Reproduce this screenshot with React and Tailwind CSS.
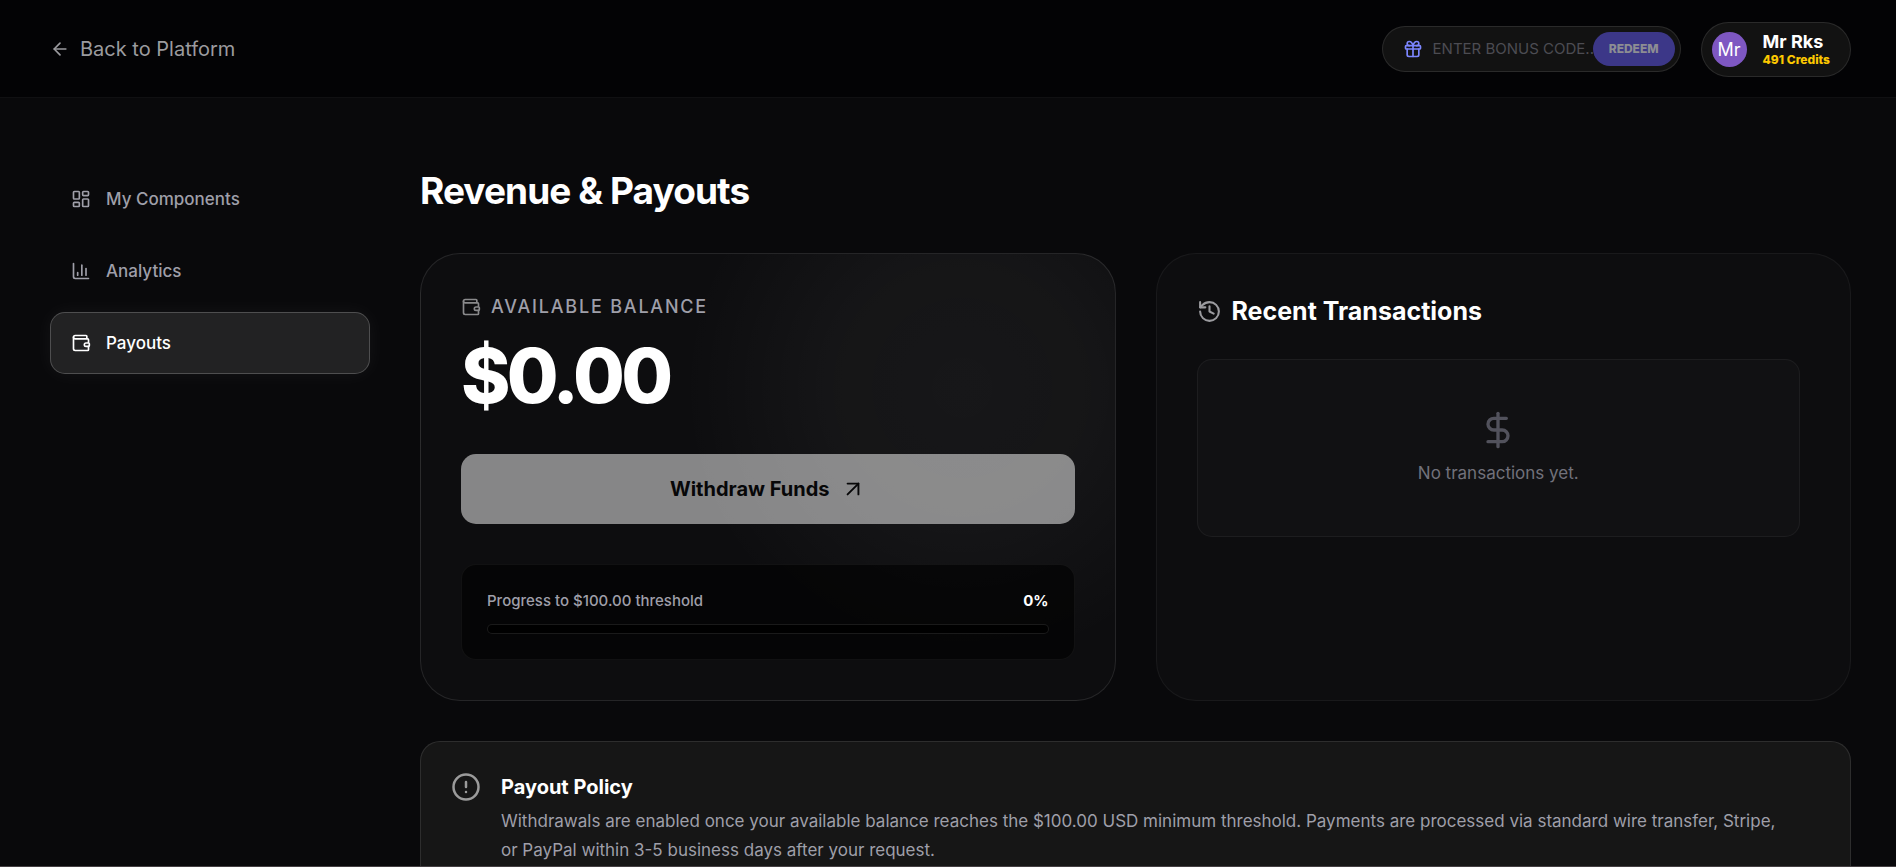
import { useState } from "react";
import {
  ArrowLeft,
  ArrowUpRight,
  ChartColumn,
  CircleAlert,
  DollarSign,
  Gift,
  History,
  LayoutDashboard,
} from "lucide-react";

const THRESHOLD = 100;

function WalletIcon({ size = 24, className }) {
  return (
    <svg
      width={size}
      height={size}
      viewBox="0 0 24 24"
      fill="none"
      stroke="currentColor"
      strokeWidth="2"
      strokeLinecap="round"
      strokeLinejoin="round"
      className={className}
      aria-hidden="true"
    >
      <path d="M19 7V4a1 1 0 0 0-1-1H5a2 2 0 0 0 0 4h15a1 1 0 0 1 1 1v4h-3a2 2 0 0 0 0 4h3a1 1 0 0 0 1-1v-2a1 1 0 0 0-1-1" />
      <path d="M3 5v14a2 2 0 0 0 2 2h15a1 1 0 0 0 1-1v-4" />
    </svg>
  );
}

const NAV_ITEMS = [
  { label: "My Components", icon: LayoutDashboard },
  { label: "Analytics", icon: ChartColumn },
  { label: "Payouts", icon: WalletIcon },
];

function Header() {
  const [code, setCode] = useState("");

  return (
    <header className="flex h-[98px] items-center justify-between border-b border-white/5 bg-[#030305] pt-px pr-[45px] pl-[50px]">
      <a href="#platform" className="flex items-center gap-[10px] text-[20px] text-[#9b9b9f]">
        <ArrowLeft size={20} />
        Back to Platform
      </a>

      <div className="flex items-center gap-5">
        <form
          onSubmit={(event) => event.preventDefault()}
          className="flex h-[46px] w-[299px] items-center rounded-full border border-white/10 bg-[#121212] pr-[5px] pl-5"
        >
          <Gift size={20} className="shrink-0 text-[#7c86ff]" />
          <input
            aria-label="Bonus code"
            value={code}
            onChange={(event) => setCode(event.target.value)}
            placeholder="ENTER BONUS CODE..."
            className="ml-[10px] min-w-0 flex-1 bg-transparent text-[15px] text-white outline-none placeholder:text-[#4c4c52]"
          />
          <button
            type="submit"
            className="h-[34px] shrink-0 rounded-full bg-[#3c3788] px-4 text-[12px] font-extrabold text-[#8d8d93]"
          >
            REDEEM
          </button>
        </form>

        <button
          type="button"
          className="flex h-[55px] items-center gap-4 rounded-full border border-white/10 bg-[#121212] pr-5 pl-[10px] text-left"
        >
          <span className="flex size-[35px] items-center justify-center rounded-full bg-[#7e57c2] text-[18px] text-white">
            Mr
          </span>
          <span className="flex flex-col">
            <span className="text-[18px] leading-[20px] font-bold text-white">Mr Rks</span>
            <span className="text-[12px] leading-[15px] font-extrabold text-[#fcc800]">
              491 Credits
            </span>
          </span>
        </button>
      </div>
    </header>
  );
}

function Sidebar() {
  return (
    <nav className="flex w-80 shrink-0 flex-col gap-[10px]">
      {NAV_ITEMS.map(({ label, icon: Icon }) => {
        const active = label === "Payouts";
        return (
          <a
            key={label}
            href="#"
            aria-current={active ? "page" : undefined}
            className={
              active
                ? "flex h-[62px] items-center gap-[15px] rounded-[15px] border border-white/20 bg-[#222223] px-5 text-[17px] leading-[25px] font-medium text-white shadow-[0_0_20px_rgba(255,255,255,0.05)]"
                : "flex h-[62px] items-center gap-[15px] rounded-[15px] border border-transparent px-5 text-[17px] leading-[25px] font-medium text-[#9f9fa9]"
            }
          >
            <Icon size={20} />
            {label}
          </a>
        );
      })}
    </nav>
  );
}

function BalanceCard({ balance }) {
  const progress = Math.min(100, Math.round((balance / THRESHOLD) * 100));

  return (
    <section className="rounded-[40px] border border-white/10 bg-[#0d0d0f] bg-[radial-gradient(circle_at_78%_30%,rgba(255,255,255,0.045),rgba(255,255,255,0.035)_120px,transparent_280px)] p-10">
      <h2 className="flex items-center gap-[10px] text-[18px] leading-[25px] font-medium tracking-widest text-[#9f9fa9] uppercase">
        <WalletIcon size={20} className="text-[#8a8a8c]" />
        Available Balance
      </h2>
      <p className="mt-3 text-[75px] leading-[90px] font-extrabold tracking-tighter text-white">
        ${balance.toFixed(2)}
      </p>
      <button
        type="button"
        className="mt-[33px] flex h-[70px] w-full items-center justify-center gap-[10px] rounded-[15px] bg-white/50 text-[20px] font-bold text-[#070708]"
      >
        Withdraw Funds
        <ArrowUpRight size={26} strokeWidth={1.75} />
      </button>
      <div className="mt-10 rounded-[15px] border border-white/5 bg-black/60 p-[25px]">
        <div className="flex items-center justify-between text-[15px] leading-[22px]">
          <span className="font-medium text-[#9f9fa9]">
            Progress to ${THRESHOLD.toFixed(2)} threshold
          </span>
          <span className="font-bold text-white">{progress}%</span>
        </div>
        <div className="mt-3 h-[10px] overflow-hidden rounded-full border border-white/10 bg-black">
          <div className="h-full bg-white" style={{ width: `${progress}%` }} />
        </div>
      </div>
    </section>
  );
}

function TransactionsCard() {
  return (
    <section className="rounded-[40px] border border-white/5 bg-[#0d0d0f] p-10">
      <h2 className="flex items-center gap-[10px] text-[25px] leading-[35px] font-bold text-white">
        <History size={25} className="text-[#9b9b9f]" />
        Recent Transactions
      </h2>
      <div className="mt-[30px] mr-[10px] flex flex-col items-center rounded-[15px] border border-white/5 bg-[#111113] py-[50px]">
        <DollarSign size={40} className="text-[#52525c]" />
        <p className="mt-[10px] text-[17px] leading-[26px] text-[#71717b]">No transactions yet.</p>
      </div>
    </section>
  );
}

function PolicyNotice() {
  return (
    <section className="mt-10 flex items-start gap-5 rounded-[20px] border border-white/10 bg-[#161616] p-[30px]">
      <CircleAlert size={30} className="shrink-0 text-[#9b9b9b]" />
      <div>
        <h3 className="text-[20px] leading-[30px] font-bold text-white">Payout Policy</h3>
        <p className="mt-[5px] pr-8 text-[17px] leading-[29px] text-[#9f9fa9]">
          Withdrawals are enabled once your available balance reaches the $100.00 USD minimum
          threshold. Payments are processed via standard wire transfer, Stripe, or PayPal within
          3-5 business days after your request.
        </p>
      </div>
    </section>
  );
}

export default function App() {
  return (
    <div className="h-screen overflow-hidden border-b border-[#454043] bg-[#09090b] font-['Inter',sans-serif]">
      <Header />
      <div className="flex gap-[50px] pt-[70px] pr-[45px] pl-[50px]">
        <Sidebar />
        <main className="min-w-0 flex-1">
          <h1 className="text-[37px] leading-[45px] font-bold tracking-tight text-white">
            Revenue &amp; Payouts
          </h1>
          <div className="mt-10 grid grid-cols-2 gap-10">
            <BalanceCard balance={0} />
            <TransactionsCard />
          </div>
          <PolicyNotice />
        </main>
      </div>
    </div>
  );
}
